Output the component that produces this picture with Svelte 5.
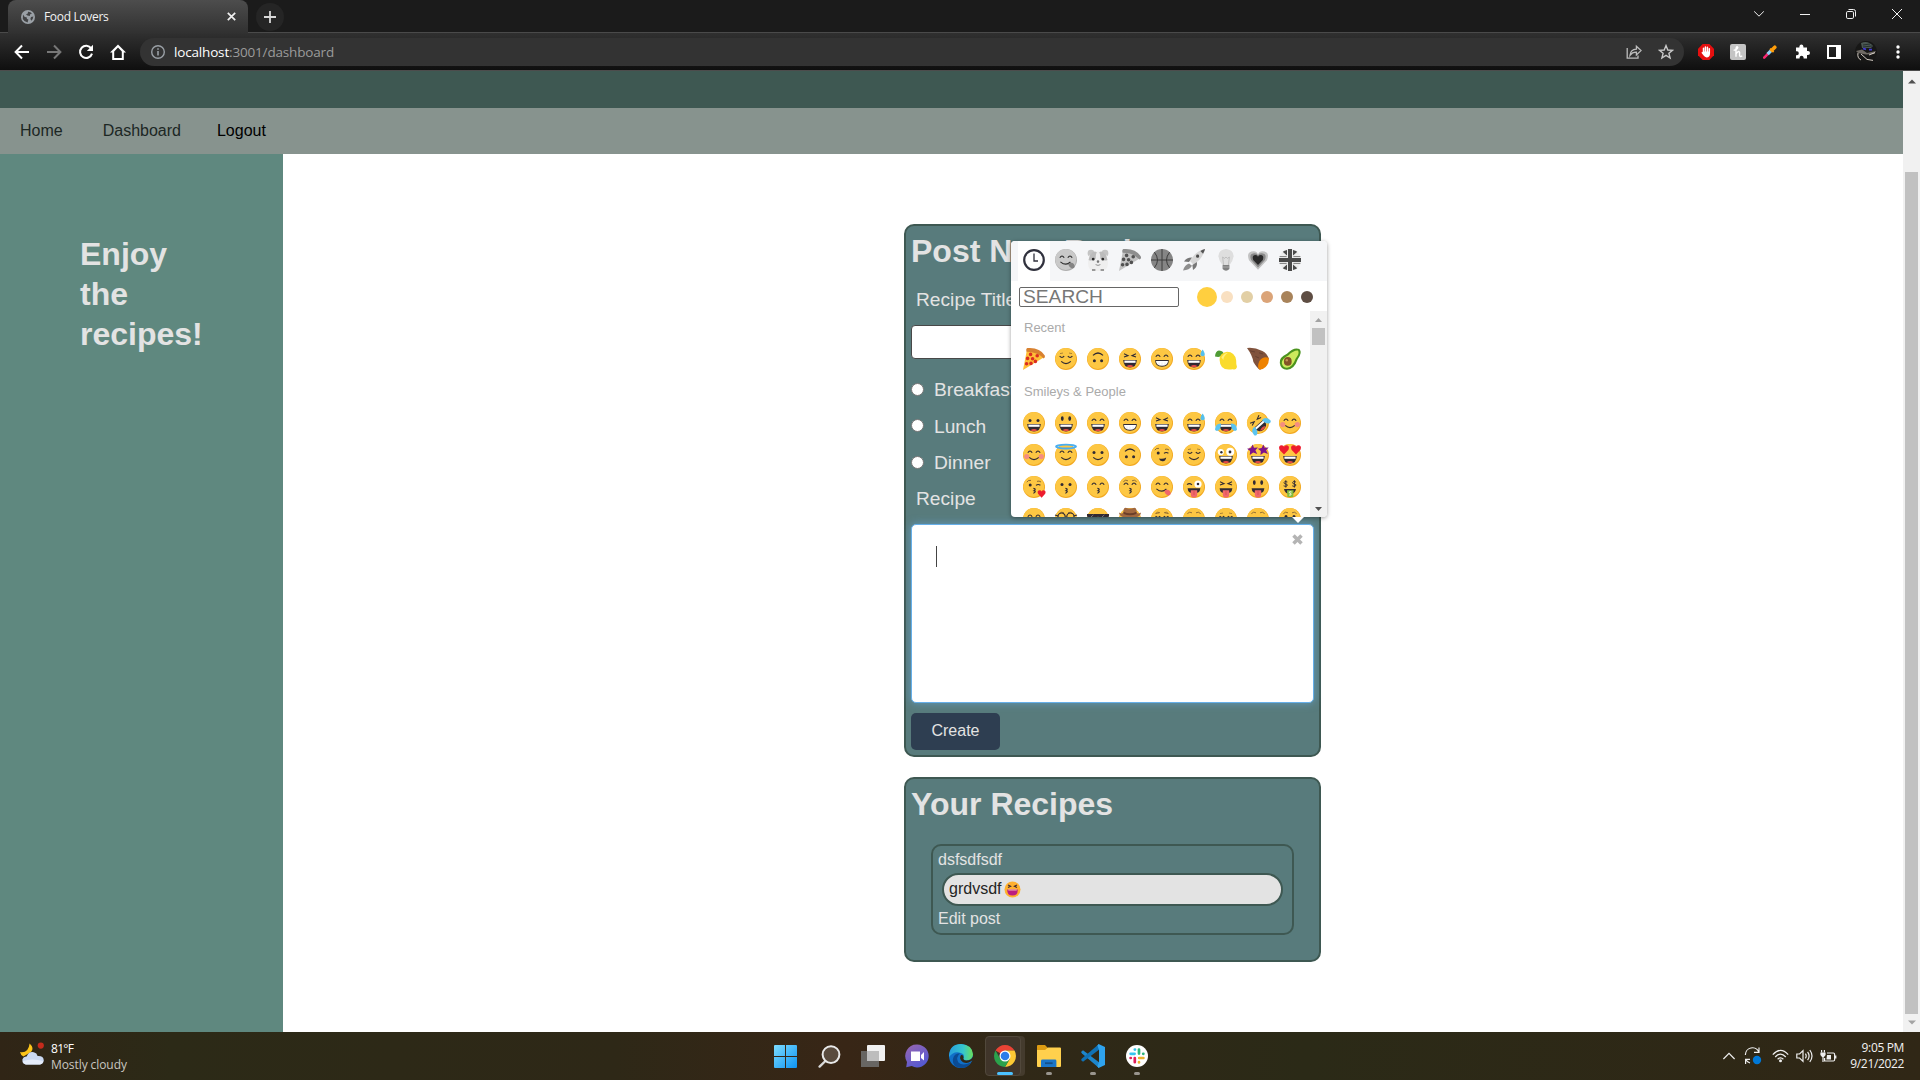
<script>
  const INK = '#302a33';
  const dot = (x, y, r, ry = r) =>
    `M${x - r} ${y}a${r} ${ry} 0 1 0 ${2 * r} 0a${r} ${ry} 0 1 0 ${-2 * r} 0Z`;
  const fill = (d, f = INK) => ({ d, f });
  const line = (d, s = INK, w = 1.1) => ({ d, s, w });

  const skin = [fill(dot(11, 11, 11), '#f2a921'), fill(dot(10.7, 10.4, 10.5), '#fdc743')];
  const heart = (x, y, k = 1) =>
    `M${x} ${y + 3.4 * k}l${-3 * k} ${-3.2 * k}q${-1.1 * k} ${-3 * k} ${1.6 * k} ${-3 * k}q${1 * k} 0 ${1.4 * k} ${1 * k}q${0.4 * k} ${-1 * k} ${1.4 * k} ${-1 * k}q${2.7 * k} 0 ${1.6 * k} ${3 * k}Z`;
  const star = (x, y) =>
    `M${x} ${y - 5}l1.3 3.2 4 -.2-2.6 2.7 1.8 3.8-4-1.6-3.4 2.6.3-4-3-2.4 3.8-.6Z`;

  const P = {
    dots: [fill(dot(7, 8.4, 1.5)), fill(dot(15, 8.4, 1.5))],
    tall: [fill(dot(7.3, 6.6, 1.4, 2.3)), fill(dot(14.7, 6.6, 1.4, 2.3))],
    happy: [line('M4.8 8.8Q7 5.2 9.2 8.8M12.8 8.8Q15 5.2 17.2 8.8')],
    squint: [line('M5 5.8L9 7.6L5 9M17 5.8L13 7.6L17 9')],
    calm: [line('M4.6 8.2Q7 10.8 9.2 8.2M12.8 8.2Q15 10.8 17.4 8.2'), line('M5 5.6L8 5M14 5L17 5.6', '#8d672e', 0.7)],
    wink: [fill(dot(7.2, 9, 1.5)), line('M13 9.4Q15 7.6 17.4 9.2'), line('M3.8 6.2Q5 3.8 8 4.4M14 5.4Q16 4.4 18 6', '#6d5230', 0.8)],
    zany: [fill(dot(5.8, 8, 3.1), '#fff'), fill(dot(15.2, 7.7, 4), '#fff'), fill(dot(6.4, 8.2, 1.2)), fill(dot(15, 8, 1.4))],
    tease: [fill(dot(15, 8, 3.6), '#fff'), fill(dot(15, 8, 1.3)), line('M4 8.6Q6.4 6.6 9 8.8')],
    stars: [fill(star(5.7, 5.6), '#7d138b'), fill(star(16.4, 5.6), '#7d138b')],
    hearts: [fill(heart(5, 5.4, 1.5), '#ed1c2e'), fill(heart(17, 5.4, 1.5), '#ed1c2e')],
    money: [line('M8.4 6Q5 4.6 5 6.7Q5 7.9 7 8Q9 8.4 8 10Q6.6 11 4.6 9.8M6.8 4.2V11.6M17 6Q13.6 4.6 13.6 6.7Q13.6 7.9 15.6 8Q17.6 8.4 16.6 10Q15.2 11 13.2 9.8M15.4 4.2V11.6', INK, 0.9)],
    open: [
      fill('M4.2 12H17.8Q17.4 19.6 11 19.6Q4.6 19.6 4.2 12Z'),
      fill('M5.4 12.6H16.6V14.8H5.4Z', '#fff'),
      fill('M7.4 18.2Q11 15.8 14.6 18.2Q11 20.4 7.4 18.2Z', '#e64a45')
    ],
    teeth: [
      fill('M4.2 12H17.8Q18 18.8 11 18.8Q4 18.8 4.2 12Z'),
      fill('M5 13H17Q16.8 17.8 11 17.8Q5.2 17.8 5 13Z', '#fff'),
      line('M8 14.6V17M11 14.6V17.6M14 14.6V17', '#c9c9c9', 0.4)
    ],
    smile: [line('M6.2 13.4Q11 17.8 15.8 13.4', INK, 1.2)],
    frown: [line('M6 7.4Q11 2.6 16 7.4', INK, 1.3), fill(dot(7.4, 12.8, 1.5)), fill(dot(14.6, 12.8, 1.5))],
    smirk: [fill('M8 14.4Q12 15.6 15.2 13.6Q14.6 17.6 11.4 17.2Q8.6 16.8 8 14.4Z')],
    kiss: [line('M10.4 12.4Q13.8 12.8 11 14.7Q13.8 15.2 10.4 17.4', INK, 1.1)],
    lick: [line('M5.4 12.8Q11 17.4 15.4 13'), fill('M13.2 15Q16.6 12.4 18.8 15Q21 19 17.6 19.4Q14.6 19.4 13.2 15Z', '#f0676b')],
    tongue: [fill('M4.6 12.2H17.4Q17 17.4 11 17.4Q5 17.4 4.6 12.2Z'), fill('M7.8 14.2H14.2V18.4Q14 21.6 11 21.6Q8 21.6 7.8 18.4Z', '#f0676b'), line('M11 15V19', '#c44', 0.6)],
    cash: [fill('M5 13H17Q16 18 11 18Q6 18 5 13Z'), fill('M8 14.2H14.6L14.2 21H8.4Z', '#84bd3a'), line('M12.6 16Q10 15 10.2 16.6Q12.8 17.4 12 19H10', '#fff', 0.8)],
    sweat: [fill('M19.6 1.4Q22.4 5.4 21.6 7.2Q19.6 9.4 17.6 7.2Q17 5.2 19.6 1.4Z', '#54c0ee')],
    tears: [fill('M0 17.6Q.4 11 6 11.4Q6 18.2 2 19Q.4 19 0 17.6Z', '#5bc4f0'), fill('M22 17.6Q21.6 11 16 11.4Q16 18.2 20 19Q21.6 19 22 17.6Z', '#5bc4f0')],
    blush: [fill(dot(3.7, 12.6, 2.6), '#f58d80'), fill(dot(18.3, 12.6, 2.6), '#f58d80')],
    halo: [line('M1 2.6a10 1.9 0 1 0 20 0a10 1.9 0 1 0 -20 0', '#4aaef0', 1.8)],
    love: [fill(heart(18.6, 17.6, 1.2), '#ed1c2e')],
    brows: [line('M4.4 5.6Q6.6 3.2 9 4.8M13 4.8Q15.4 3.2 17.6 5.6', '#7a5c33', 0.8)],
    glasses: [line(dot(6.6, 8.6, 3.6) + dot(15.4, 8.6, 3.6) + 'M0 7L3 8M19 8L22 7', INK, 1.2)],
    shades: [fill('M0 6H22V8Q20 12 15 11.6Q12.6 11 11 8.4Q9.4 11 7 11.6Q2 12 0 8Z'), line('M3.6 9.4L6.4 6.8M14.6 9.4L17.4 6.8', '#77767f', 1)],
    hat: [fill('M0 4.4Q4.4 7.6 4.6 2Q5 -1.4 8.6 .2Q11 1 13.4 .2Q17 -1.4 17.4 2Q17.6 7.6 22 4.4Q21.6 10 11 10Q.4 10 0 4.4Z', '#a1683f'), fill('M4.6 3.8Q11 6.8 17.4 3.8V6Q11 8.4 4.6 6Z', '#6b3f2a')],
    pizza: [
      fill('M0 22L3.8 2.6Q15 1.6 20.6 9.6Z', '#ffbe37'),
      fill('M4.4 0Q16.6 -1 21.8 7.4Q22.6 9.4 20.6 10.6Q14 3.6 3.6 3.8Q2.6 .6 4.4 0Z', '#d88130'),
      ...[[7.6, 6.4], [4.6, 10.4], [9.6, 10.8], [14.2, 7.8], [3.6, 15.8], [12.4, 13.4], [8, 15.4]].map(([x, y]) => fill(dot(x, y, 1.8), '#db2d22'))
    ],
    lemon: [
      fill('M4 2.6Q.4 3 0 8.6Q5.6 10.2 8.6 6.6Q9 3 4 2.6Z', '#4f9b35'),
      fill('M4.6 12Q4.2 5.2 12 3.8Q19.8 3.8 21.2 12.4Q21 16.4 22 19Q20.8 22.6 17.8 21.2Q5 23.6 4.6 12Z', '#fadb2b'),
      fill('M6.4 9.6Q8.4 5.4 13 4.8Q8.4 8 8.4 12Z', '#fff07a')
    ],
    yam: [
      fill('M0 0Q7 -1 15.4 3Q20 5.4 21.8 10.6Q20 18 13 21.8Q10 20 6.4 14Q5.4 7.4 0 0Z', '#80523c'),
      { ...fill('M21.6 9.8Q22.6 15 18.6 19Q14.4 22.6 12 21.2Q10 18.4 12.4 13Q16 8 21.6 9.8Z', '#ee8200') },
      line('M3 2.8L8 4M8.4 8.4L12 10M12 4.8L16 6', '#5b3a2e', 0.7)
    ],
    avocado: [
      fill('M.8 15Q0 9.4 8 5.8Q15 -1.4 20.4 1Q23.8 4.6 18.6 11.4Q15.4 21 8 21.8Q1.6 21.6 .8 15Z', '#4b931e'),
      fill('M2.8 15Q3 10.4 9.6 7.2Q15 2 19 2.6Q21 5.4 16.6 10.8Q13.6 19.2 8 19.8Q3.4 19.6 2.8 15Z', '#cdea5c'),
      fill(dot(8.8, 13.4, 3.9, 4.3), '#845326'),
      fill(dot(7.8, 12.2, 1.2), '#c39355')
    ],
    clock: [line(dot(11, 11, 9.8), '#30313d', 2.2), line('M11 4.6V12H15', '#30313d', 1.3)],
    hamster: [
      fill(dot(4, 4.2, 3.4), '#c4c4c4'), fill(dot(18, 4.2, 3.4), '#c4c4c4'),
      fill('M2.4 6Q11 -1.4 19.6 6Q24 22 14 22H8Q-2 22 2.4 6Z', '#efefef'),
      fill('M3 5.6Q7 1 9.8 3.2Q8.4 6 8.8 9.4Q5 12.6 1.6 11Z', '#bcbcbc'), fill('M19 5.6Q15 1 12.2 3.2Q13.6 6 13.2 9.4Q17 12.6 20.4 11Z', '#bcbcbc'),
      fill(dot(6.2, 10.2, 1.4)), fill(dot(15.8, 10.2, 1.4)), fill(dot(11, 12.6, 1.3), '#777'),
      line('M8.6 15.6Q11 17.2 13.4 15.6', '#888', 0.9), fill('M5 20h3.4v2h-3.4ZM13.6 20h3.4v2h-3.4Z', '#999')
    ],
    ball: [fill(dot(11, 11, 11), '#858585'), line('M11 0V22M0 11H22M3.4 3.2Q9.6 11 3.4 18.8M18.6 3.2Q12.4 11 18.6 18.8', '#3c3c3c', 1)],
    rocket: [
      fill('M7 12Q12 2.4 22 0Q20 9.6 10.4 15.6Z', '#d6d6d6'), fill('M1 12.6Q3.6 8.4 9 8.6L6 13Z', '#777'), fill('M10 21Q14.4 18.6 14 13L9.4 16Z', '#777'),
      fill('M0 21.6Q1.6 15.6 6 14.4L9 16.8Q6.4 21.2 0 21.6Z', '#8e8e8e'), fill('M17.4 2Q19.6 .4 22 0Q21.6 2.6 20 4.8Z', '#555'), fill(dot(14.6, 7.2, 1.6), '#4a4a4a')
    ],
    bulb: [
      fill('M11 0Q18.6 .6 18.6 7.6Q18 12 14.6 16H7.4Q4 12 3.4 7.6Q3.4 .6 11 0Z', '#dedede'),
      line('M8.6 16L7.6 8L9.6 9.4L11 8L12.4 9.4L14.4 8L13.4 16', '#aaa', 0.6), fill('M7.6 16H14.4V20Q11 23.6 7.6 20Z', '#808080'), line('M7.4 18H14.6', '#bbb', 0.7)
    ],
    beat: [fill(heart(11, 10.6, 3), '#c2c2c2'), fill(heart(11, 10.6, 2.3), '#888'), fill(heart(11, 10.6, 1.6), '#292929')],
    flag: [
      fill(dot(11, 11, 11), '#eee'),
      fill('M3 3.4L8 7.4V1L5 2ZM19 3.4L14 7.4V1L17 2ZM3 18.6L8 14.6V21L5 20ZM19 18.6L14 14.6V21L17 20Z', '#4a4a4a'),
      fill('M9 0H13V9H22V13H13V22H9V13H0V9H9Z', '#494949'), line('M3 3L8.4 7.8M19 3L13.6 7.8M3 19L8.4 14.2M19 19L13.6 14.2', '#eee', 1.3),
      line('M.6 7.6H7.6M14.4 7.6H21.4M.6 14.4H7.6M14.4 14.4H21.4', '#4a4a4a', 0.7)
    ]
  };

  const face = (...parts) => [...skin, ...parts.flatMap((p) => P[p])];
  const rolling = face('squint', 'open', 'tears');

  const tabs = [P.clock, face('happy', 'lick'), P.hamster, P.pizza, P.ball, P.rocket, P.bulb, P.beat, P.flag];
  const recent = [
    P.pizza, face('calm', 'smile'), face('frown'), face('squint', 'open'), face('happy', 'teeth'),
    face('happy', 'open', 'sweat'), P.lemon, P.yam, P.avocado
  ];
  const people = [
    face('dots', 'open'), face('tall', 'open'), face('happy', 'open'), face('happy', 'teeth'), face('squint', 'open'),
    face('happy', 'open', 'sweat'), face('happy', 'open', 'tears'), rolling, face('happy', 'smile', 'blush'),
    face('happy', 'smile', 'blush'), face('happy', 'smile', 'halo'), face('dots', 'smile'), face('frown'),
    face('wink', 'smirk'), face('calm', 'smile'), face('zany', 'open'), face('stars', 'open'), face('hearts', 'open'),
    face('wink', 'kiss', 'love'), face('dots', 'kiss'), face('happy', 'kiss'), face('happy', 'brows', 'kiss'),
    face('happy', 'lick'), face('tease', 'tongue'), face('squint', 'tongue'), face('tall', 'tongue'), face('money', 'cash'),
    face('happy', 'blush'), face('brows', 'glasses'), face('shades'), face('hat'), face('brows', 'calm'),
    face('brows'), face('calm'), face('brows'), face('brows', 'dots')
  ];
  const tilted = people.indexOf(rolling);
  const tones = ['#f9e0c1', '#e2cfa5', '#dba478', '#a8835a', '#5e4d43'];
  const meals = ['Breakfast', 'Lunch', 'Dinner'];
</script>

{#snippet emoji(shapes, tilt)}
  <svg class="emoji" class:tilt viewBox="0 0 22 22">
    {#each shapes as p}
      <path d={p.d} fill={p.f ?? 'none'} stroke={p.s ?? 'none'} stroke-width={p.w ?? 0} />
    {/each}
  </svg>
{/snippet}

<div class="screen">
  <header class="browser">
    <div class="strip">
      <div class="tab">
        <svg class="globe" width="14" height="14" viewBox="0 0 14 14"><circle cx="7" cy="7" r="7" fill="#9aa0a6" /><path d="M2 4.4Q3 7 5.6 7.2L6 9L7.4 9.6L6.6 12.4Q3.2 12 1.8 9ZM7 1.8Q9.4 1.6 11 3.6L9.2 4.2L8.8 6L6.4 5.4L5 4.2L6.8 3.4ZM10 7L12.4 6.6Q12 9.6 10.4 10.8L9.4 9Z" fill="#424345" /></svg>
        <span class="tab-title">Food Lovers</span>
        <svg width="9" height="9" viewBox="0 0 9 9"><path d="M.8 .8L8.2 8.2M8.2 .8L.8 8.2" stroke="#f0f0f0" stroke-width="1.7" /></svg>
      </div>
      <div class="new-tab"><svg width="12" height="12" viewBox="0 0 12 12"><path d="M6 0V12M0 6H12" stroke="#d8d8d8" stroke-width="1.8" /></svg></div>
      <div class="controls">
        <svg viewBox="0 0 10 10"><path d="M0 2.2L5 7.2L10 2.2" /></svg>
        <svg viewBox="0 0 10 10"><path d="M0 5.5H10" /></svg>
        <svg viewBox="0 0 10 10"><rect x=".5" y="2.5" width="7" height="7" rx="1.3" /><path d="M2.5 .5H7.5Q9.5 .5 9.5 2.5V7.5" /></svg>
        <svg viewBox="0 0 10 10"><path d="M0 0L10 10M10 0L0 10" /></svg>
      </div>
    </div>
    <div class="toolbar">
      <div class="nav-icons">
        <svg viewBox="0 0 16 16"><path d="M15 8H2M8 1.5L1.6 8L8 14.5" stroke="#fff" stroke-width="2" fill="none" /></svg>
        <svg viewBox="0 0 16 16"><path d="M1 8H14M8 1.5L14.4 8L8 14.5" stroke="#777" stroke-width="2" fill="none" /></svg>
        <svg viewBox="0 0 16 16"><path d="M13.2 4.4A6.1 6.1 0 1 0 14 9.6" stroke="#fff" stroke-width="2" fill="none" /><path d="M15 .8V7H8.8Z" fill="#fff" /></svg>
        <svg viewBox="0 0 16 16"><path d="M0 8.6L8 .6L16 8.6H13.8V16H2.2V8.6ZM4.2 7.4V14H11.8V7.4L8 3.4Z" fill="#fff" fill-rule="evenodd" /></svg>
      </div>
      <div class="omnibox">
        <svg width="14" height="14" viewBox="0 0 14 14"><circle cx="7" cy="7" r="6.3" fill="none" stroke="#9aa0a6" stroke-width="1.4" /><path d="M7 6V10.6M7 3.2V4.8" stroke="#9aa0a6" stroke-width="1.6" /></svg>
        <span class="url"><b>localhost</b>:3001/dashboard</span>
        <svg width="16" height="16" viewBox="0 0 16 16"><path d="M1.2 4V14.2H12V11.4M4 11.4Q4.4 5.6 10.4 5.2V2.2L15 6.6L10.4 11V8.2Q6.4 8 4 11.4Z" fill="none" stroke="#bdbdbd" stroke-width="1.3" /></svg>
        <svg width="16" height="16" viewBox="0 0 16 16"><path d="M8 1.6L9.8 6L14.6 6.3L10.9 9.3L12.1 14L8 11.4L3.9 14L5.1 9.3L1.4 6.3L6.2 6Z" fill="none" stroke="#c9c9c9" stroke-width="1.4" /></svg>
      </div>
      <div class="extensions">
        <svg width="16" height="16" viewBox="0 0 16 16"><path d="M4.7 0H11.3L16 4.7V11.3L11.3 16H4.7L0 11.3V4.7Z" fill="#e60f0f" /><path d="M5.5 9V4.2M7.4 8V2.9M9.4 8V3.2M11.3 9V4.8" stroke="#fff" stroke-width="1.5" stroke-linecap="round" /><path d="M4.8 7.6H12V10Q11.8 13.4 8.6 13.4Q6.8 13.4 5.6 11.6L3.4 8.8Q4 7.8 4.8 8.2Z" fill="#fff" /></svg>
        <svg width="16" height="16" viewBox="0 0 16 16"><rect width="16" height="16" rx="2" fill="#c4c4c4" /><path d="M3.6 6.4Q7.4 5.8 7.8 3.4Q6.6 1.6 6 4.6V12.8M6 10Q8.4 6.2 9.6 8.4V11.4Q10 13.4 12.2 11.8" fill="none" stroke="#fff" stroke-width="1.4" /></svg>
        <svg width="14" height="14" viewBox="0 0 14 14"><path d="M1.2 12.6L5.4 8.4" stroke="#f92872" stroke-width="2.6" stroke-linecap="round" /><path d="M4.6 9.2L8.6 5.2" stroke="#8fd0f5" stroke-width="3.2" /><path d="M7 3.6L10.6 7.2" stroke="#ff9d0a" stroke-width="1.8" /><path d="M9 5L11.8 2.2" stroke="#ff9d0a" stroke-width="3.6" stroke-linecap="round" /></svg>
        <svg width="15" height="15" viewBox="0 0 15 15"><path d="M1 3.6H4.4V2.6Q4.6 .4 6.4 .4Q8.2 .4 8.4 2.6V3.6H12V7H13Q15 7.2 15 8.9Q15 10.8 13 11H12V14.6H8.6V13.6Q8.4 11.8 6.6 11.8Q4.8 11.8 4.6 13.6V14.6H1V11.2H2Q3.8 11 3.8 9.2Q3.8 7.4 2 7.2H1Z" fill="#fff" /></svg>
        <svg width="14" height="14" viewBox="0 0 14 14"><path d="M0 0H14V14H0ZM2 2V12H9V2Z" fill="#fff" fill-rule="evenodd" /></svg>
        <svg width="22" height="22" viewBox="0 0 22 22"><circle cx="11" cy="11" r="11" fill="#171716" /><path d="M6 2Q13 -1 18 5L16 7H7Z" fill="#4b5853" /><path d="M1 10L7 8.4L12 12L21 10L19 13L11 13.6L3 12Z" fill="#6f6a64" /><path d="M8 7.4L11 8.4M14 8.6L17 8.6" stroke="#3f38d0" stroke-width="1.8" /><path d="M3 12Q2 17 6 19M6 13L12 18.4L18 19.4M14 14L20 11.6" stroke="#d4ccc4" stroke-width="1" fill="none" /><path d="M8 4L15 3M8 6L17 5" stroke="#222b2b" stroke-width=".9" /></svg>
        <svg width="4" height="14" viewBox="0 0 4 14"><circle cx="2" cy="2" r="1.7" fill="#fff" /><circle cx="2" cy="7" r="1.7" fill="#fff" /><circle cx="2" cy="12" r="1.7" fill="#fff" /></svg>
      </div>
    </div>
  </header>

  <div class="viewport">
    <div class="page">
      <div class="banner"></div>
      <nav><span>Home</span><span>Dashboard</span><span class="logout">Logout</span></nav>
      <div class="body">
        <aside><h1>Enjoy<br />the<br />recipes!</h1></aside>
        <main>
          <section class="card post">
            <h1>Post New Recipe</h1>
            <div class="label">Recipe Title</div>
            <div class="field"></div>
            <div class="meals">
              {#each meals as meal}
                <div class="meal"><i></i><span>{meal}</span></div>
              {/each}
            </div>
            <div class="label recipe">Recipe</div>
            <div class="editor">
              <span class="caret"></span>
              <svg width="11" height="11" viewBox="0 0 11 11"><path d="M1.5 1.5L9.5 9.5M9.5 1.5L1.5 9.5" stroke="#b4b4b4" stroke-width="3.5" /></svg>
            </div>
            <div class="create">Create</div>

            <div class="picker">
              <div class="panel">
                <div class="tabs">
                  {#each tabs as t, i}
                    <div class="cell" class:active={i === 0} class:gray={i > 0}>{@render emoji(t, false)}</div>
                  {/each}
                </div>
                <div class="search">
                  <div class="box">SEARCH</div>
                  <div class="tones">
                    <i class="selected"></i>
                    {#each tones as tone}<i style:background={tone}></i>{/each}
                  </div>
                </div>
                <div class="list">
                  <div class="groups">
                    <h4>Recent</h4>
                    <div class="grid">{#each recent as e}<div class="cell">{@render emoji(e, false)}</div>{/each}</div>
                    <h4>Smileys &amp; People</h4>
                    <div class="grid">{#each people as e, i}<div class="cell">{@render emoji(e, i === tilted)}</div>{/each}</div>
                  </div>
                  <div class="bar small">
                    <svg width="7" height="4" viewBox="0 0 7 4"><path d="M0 4L3.5 0L7 4Z" fill="#a3a3a3" /></svg>
                    <div class="thumb"></div>
                    <svg width="7" height="4" viewBox="0 0 7 4"><path d="M0 0L3.5 4L7 0Z" fill="#505050" /></svg>
                  </div>
                </div>
              </div>
              <svg class="pointer" width="12" height="6" viewBox="0 0 12 6"><path d="M0 0H12L6 6Z" fill="#fff" /></svg>
            </div>
          </section>

          <section class="card yours">
            <h1>Your Recipes</h1>
            <div class="recipe-item">
              <div>dsfsdfsdf</div>
              <div class="pill"><span>grdvsdf</span><svg width="17" height="17" viewBox="0 0 17 17"><circle cx="8.5" cy="8.5" r="8" fill="#ffb02e" /><path d="M3.2 8.4H13.8Q14 14.6 8.5 14.6Q3 14.6 3.2 8.4Z" fill="#bb1d80" /><path d="M4 8.4H13L12.6 9.6H4.4Z" fill="#f3b9b5" /><path d="M4 4L6.6 5.2L4 6.4M13 4L10.4 5.2L13 6.4" fill="none" stroke="#402a32" stroke-width="1.1" /></svg></div>
              <div>Edit post</div>
            </div>
          </section>
        </main>
      </div>
    </div>
    <div class="bar">
      <svg width="8" height="5" viewBox="0 0 8 5"><path d="M0 4.5L4 .5L8 4.5Z" fill="#505050" /></svg>
      <div class="thumb"></div>
      <svg width="8" height="5" viewBox="0 0 8 5"><path d="M0 .5L4 4.5L8 .5Z" fill="#a3a3a3" /></svg>
    </div>
  </div>

  <footer>
    <div class="weather">
      <svg width="24" height="24" viewBox="0 0 24 24"><path d="M9.6 1.4Q14.6 6 11 10L3.4 14.6Q.6 13 0 10Q8.4 11.4 9.6 1.4Z" fill="#fcc419" /><path d="M5.6 22.4Q2 22 2.4 17.6Q3.4 14.4 6.6 14.4Q9 9 13.8 10.2Q17 11 17.6 14Q23.6 13.6 23.8 18.4Q23.4 22 20 22.4Z" fill="#cbd9f2" /><path d="M6 22.4Q3 22 3 19Q12 16 23 19Q23 22 20 22.4Z" fill="#e6edfa" /><circle cx="20.8" cy="3.6" r="3.1" fill="#c42b1c" /></svg>
      <div class="forecast"><b>81°F</b><span>Mostly cloudy</span></div>
    </div>
    <div class="apps">
      <div class="app">
        <svg width="23" height="23" viewBox="0 0 23 23"><defs><linearGradient id="win" x2="1" y2="1"><stop stop-color="#7ddcff" /><stop offset="1" stop-color="#0d93f2" /></linearGradient></defs><path d="M1 0H11V11H0V1Q0 0 1 0ZM12 0H22Q23 0 23 1V11H12ZM0 12H11V23H1Q0 23 0 22ZM12 12H23V22Q23 23 22 23H12Z" fill="url(#win)" /></svg>
      </div>
      <div class="app"><svg width="23" height="23" viewBox="0 0 23 23"><path d="M7.4 16L1.6 21.6" stroke="#d8d8d8" stroke-width="2.4" stroke-linecap="round" /><circle cx="13" cy="9.6" r="8.4" fill="#594b3e" stroke="#e9e9e9" stroke-width="2" /></svg></div>
      <div class="app"><svg width="24" height="22" viewBox="0 0 24 22"><rect x="6" width="18" height="16" rx="1" fill="#f1f1f1" /><path d="M0 6H18V22H0Z" fill="#686663" /><path d="M6 6H18V16H6Z" fill="#bdbdbd" /></svg></div>
      <div class="app"><svg width="24" height="24" viewBox="0 0 24 24"><defs><linearGradient id="chat" x2=".6" y2="1"><stop stop-color="#9a66b0" /><stop offset="1" stop-color="#5459d2" /></linearGradient></defs><path d="M12 0.6A11.4 11.4 0 1 1 6.8 22L1.2 23.2L2 18A11.4 11.4 0 0 1 12 .6Z" fill="url(#chat)" /><path d="M6 7.6H15V17H6ZM16 11L19 8V16.6L16 14Z" fill="#fff" /></svg></div>
      <div class="app"><svg width="24" height="24" viewBox="0 0 24 24"><defs><linearGradient id="edge"><stop stop-color="#279ddd" /><stop offset=".6" stop-color="#36c6cc" /><stop offset="1" stop-color="#6bdf57" /></linearGradient></defs><circle cx="12" cy="12" r="12" fill="#1170c8" /><path d="M0 11Q1.2 0 12 0Q23.4 .6 24 10.6Q23.4 16.4 17.4 16.4Q13.4 16 14.6 13.4Q15.6 10 11.8 9Q5 6.4 0 13Z" fill="url(#edge)" /><path d="M11 9.2Q6.4 13.4 9.4 18.4Q13.4 22.4 22 18.4Q18.6 24 12 24Q3.4 23.4 3.8 15.4Q5 9 11 9.2Z" fill="#0b4b94" /><path d="M12 11Q9.4 15 14 18.2Q18.4 20 21.6 17.6L24 16V12.4Q22.4 16.4 17.4 16.4Q13.4 16 14.6 13.4Q14.6 10.6 12 11Z" fill="#302716" /></svg></div>
      <div class="app open current"><svg width="22" height="22" viewBox="0 0 22 22"><path d="M11 11L1.5 5.5A11 11 0 0 1 20.5 5.5H11Z" fill="#ea4335" /><path d="M11 11V5.5H20.5A11 11 0 0 1 11 22L15.8 13.7Z" fill="#fcc934" /><path d="M11 11L15.8 13.7L11 22A11 11 0 0 1 1.5 5.5L6.2 13.7Z" fill="#2ba24c" /><circle cx="11" cy="11" r="5.5" fill="#fff" /><circle cx="11" cy="11" r="4.3" fill="#2b7de9" /></svg></div>
      <div class="app open"><svg width="24" height="22" viewBox="0 0 24 22"><path d="M0 1Q0 0 1 0H8L11 3H23Q24 3 24 4V10H0Z" fill="#dc9b12" /><path d="M0 5H8L11 2.6H23Q24 2.6 24 4V21Q24 22 23 22H1Q0 22 0 21Z" fill="#ffd04d" /><path d="M4 22V16Q4 14.6 5.6 14.6H18Q19.4 14.6 19.4 16V22Z" fill="#1a76c9" /><path d="M8 18.2H15.6" stroke="#155088" stroke-width="1.8" /></svg></div>
      <div class="app open"><svg width="24" height="24" viewBox="0 0 24 24"><path d="M0 8L2 6.2L18 18.2V24L1 9.4Z" fill="#1d86cc" /><path d="M0 16L2 17.8L18 5.8V0L1 14.6Z" fill="#1072b6" /><path d="M17.6 0L24 3V21L17.6 24L16.4 22.6L18 18V6L16.4 1.4Z" fill="#2fa3ee" /></svg></div>
      <div class="app open"><svg width="22" height="22" viewBox="0 0 22 22"><circle cx="11" cy="11" r="11" fill="#fff" /><g fill="none" stroke-width="2.7" stroke-linecap="round"><path d="M4.6 8.8H8.6M8.8 4.6H9" stroke="#36c5f0" /><path d="M13 4.6V8.6M17.2 8.8H17.4" stroke="#2eb67d" /><path d="M13.2 13H17.4M13 17.2V17.4" stroke="#ecb22e" /><path d="M8.8 13V17.2M4.6 13H4.8" stroke="#e01e5a" /></g></svg></div>
    </div>
    <div class="tray">
      <svg width="14" height="8" viewBox="0 0 14 8"><path d="M1.4 7L7 1.4L12.6 7" /></svg>
      <svg class="sync" width="18" height="18" viewBox="0 0 18 18"><path d="M1.4 8A7 7 0 0 1 14.8 5M15 .6V5.4H10M6 16Q2.6 14.6 2 12.6M1.6 17V12.4H6" /><circle cx="13" cy="13" r="4.2" fill="#0078d7" stroke="none" /></svg>
      <svg width="17" height="14" viewBox="0 0 17 14"><path d="M.8 5.6Q8.5 -2.8 16.2 5.6M3.2 8Q8.5 2.4 13.8 8M5.6 10.2Q8.5 7.4 11.4 10.2" /><circle cx="8.5" cy="11.8" r="1.5" fill="#eee" stroke="none" /></svg>
      <svg width="17" height="14" viewBox="0 0 17 14"><path d="M.8 5H3.6L7 1.6V12.4L3.6 9H.8ZM9.4 4.6Q11 7 9.4 9.4M11.6 2.8Q14.6 7 11.6 11.2M13.8 1Q18.2 7 13.8 13" /></svg>
      <svg width="17" height="13" viewBox="0 0 17 13"><path d="M7 3H13.4Q14.6 3 14.6 4.2V9.8Q14.6 11 13.4 11H4.6V8M15.8 5.4V8.6M1.6 0V2.6M4.4 0V2.6M3 6V12" /><path d="M.4 2.6H5.6V5L4 7H2L.4 5ZM7 5H11V9.4H6.4Z" fill="#eee" stroke="none" /></svg>
      <div class="clock"><span>9:05 PM</span><span>9/21/2022</span></div>
    </div>
  </footer>
</div>

<style>
  :global(body) { margin: 0; overflow: hidden; }
  .screen { width: 1920px; height: 1080px; display: flex; flex-direction: column; background: #fff; color: #e3e3e3; font: 16px/20px Arial, 'Liberation Sans', sans-serif; }
  .screen :global(svg) { display: block; flex: none; }
  h1, h4 { margin: 0; }

  .browser { height: 70px; border-bottom: 1px solid #4c4c4c; background: #1b1b1b; font-family: 'Open Sans', 'Noto Sans', sans-serif; }
  .strip { height: 33px; display: flex; border-bottom: 1px solid #4a4a4a; box-sizing: border-box; }
  .tab { width: 240px; height: 34px; margin-left: 8px; padding: 0 12px 0 13px; box-sizing: border-box; display: flex; align-items: center; border-radius: 8px 8px 0 0; background: linear-gradient(#4d4d4d, #303030); }
  .tab > :global(svg) { margin-top: -1px; }
  .tab-title { flex: 1; margin: 0 0 0 9px; font-size: 12px; letter-spacing: -.32px; color: #f2f2f2; }
  .new-tab { width: 28px; height: 28px; margin: 3px 0 0 8px; border-radius: 50%; background: #252525; display: grid; place-items: center; }
  .controls { display: flex; gap: 36px; margin: 9px 18px 0 auto; }
  .controls svg { width: 10px; height: 10px; fill: none; stroke: #f0f0f0; stroke-width: 1; }
  .toolbar { height: 37px; display: flex; align-items: center; background: linear-gradient(#303030, #0f0f0f); }
  .nav-icons { display: flex; gap: 16px; padding: 1px 14px 0; }
  .nav-icons svg { width: 16px; height: 16px; }
  .omnibox { width: 1544px; height: 28px; padding: 0 10px 0 11px; box-sizing: border-box; border-radius: 14px; background: #333; display: flex; align-items: center; gap: 16px; }
  .url { flex: 1; margin-left: -7px; font-size: 13.5px; letter-spacing: -.17px; color: #9b9b9b; }
  .url b { font-weight: 400; color: #fff; }
  .extensions { display: grid; grid-template-columns: repeat(7, 32px); place-items: center; margin-left: 6px; }

  .viewport { height: 961px; display: flex; }
  .page { width: 1903px; display: flex; flex-direction: column; }
  .banner { height: 37px; background: #3e5852; }
  nav { height: 46px; box-sizing: border-box; padding: 13px 20px 0; display: flex; gap: 40px; background: #87938e; color: #1c2724; }
  .logout { margin-left: -4px; color: #000; }
  .body { flex: 1; display: flex; }
  aside { width: 283px; box-sizing: border-box; padding: 80px 0 0 80px; background: #5f887f; }
  h1 { font-size: 32px; line-height: 40px; }
  main { flex: 1; padding: 70px 0 0 621px; display: flex; flex-direction: column; gap: 20px; }
  .card { position: relative; width: 417px; box-sizing: border-box; padding: 5px; border: 2px solid #3e5852; border-radius: 10px; background: #587b7c; }
  .post { height: 533px; }
  .yours { height: 185px; }
  .label { margin: 17px 0 0 5px; font-size: 19.2px; line-height: 24px; }
  .field { height: 34px; margin-top: 13px; box-sizing: border-box; border: 1px solid #484848; border-radius: 4px; background: #fff; }
  .meals { margin-top: 18px; display: flex; flex-direction: column; gap: 12.5px; }
  .meal { display: flex; align-items: center; gap: 10px; font-size: 19.2px; line-height: 24px; }
  .meal span { margin: 1px 0 -1px; }
  .meal i { width: 13px; height: 13px; box-sizing: border-box; border: 1px solid #767676; border-radius: 50%; background: #fff; }
  .label.recipe { margin-top: 13px; }
  .editor { height: 179px; margin-top: 13px; box-sizing: border-box; padding: 21px 10px 0 24px; display: flex; justify-content: space-between; border: 1px solid #66afe9; border-radius: 5px; background: #fff; box-shadow: 0 0 8px rgba(102, 175, 233, .6); width: 403px; }
  .caret { width: 1px; height: 21px; background: #444; }
  .editor svg { margin-top: -12px; }
  .create { width: 89px; height: 37px; margin-top: 10px; border-radius: 5px; background: #2e3e51; text-align: center; line-height: 35px; }

  .picker { position: absolute; left: 105px; top: 15px; width: 316px; }
  .panel { height: 276px; overflow: hidden; border-radius: 4px; background: #fff; box-shadow: 0 1px 4px rgba(0, 0, 0, .38); }
  .tabs { height: 40px; padding-left: 7px; display: flex; background: #f5f6f8; }
  .tabs .cell { height: 38px; padding-bottom: 2px; }
  .cell { width: 32px; height: 32px; display: grid; place-items: center; }
  .active { background: #fff; }
  .gray { filter: grayscale(1); }
  .emoji { width: 22px; height: 22px; overflow: visible; }
  .tilt { transform: rotate(-42deg); }
  .search { height: 30px; padding: 6px 0 0 8px; box-sizing: border-box; display: flex; }
  .box { width: 160px; height: 20px; box-sizing: border-box; padding-left: 3px; border: 1px solid #666; border-radius: 2px; color: #777; font-size: 19.2px; line-height: 17px; }
  .tones { height: 20px; margin-left: 18px; display: flex; align-items: center; gap: 8px; }
  .tones i { width: 12px; height: 12px; border-radius: 50%; }
  .tones .selected { width: 20px; height: 20px; margin-right: -4px; background: #ffcf3f; }
  .list { height: 206px; display: flex; }
  .groups { width: 299px; padding-left: 7px; box-sizing: border-box; }
  .groups h4 { height: 32px; padding-left: 6px; color: #aaa; font-size: 13px; font-weight: 400; line-height: 33px; }
  .grid { display: grid; grid-template-columns: repeat(9, 32px); }
  .bar { width: 17px; box-sizing: border-box; padding: 8px 2px 7px; background: #f1f1f1; display: flex; flex-direction: column; align-items: center; }
  .bar .thumb { width: 13px; height: 843px; margin: 88px 0 6px; background: #c1c1c1; }
  .bar.small { padding: 7px 2px 6px; }
  .bar.small .thumb { height: 17px; margin: 6px 0 auto; }
  .pointer { margin-left: 281px; position: relative; }

  .recipe-item { width: 363px; height: 91px; box-sizing: border-box; margin: 20px 0 0 20px; padding: 4px 5px; border: 2px solid #3e5852; border-radius: 10px; }
  .pill { width: 341px; height: 33px; margin: 3px 0 0 4px; padding-left: 5px; box-sizing: border-box; display: flex; align-items: center; gap: 3px; border: 2px solid #3e5852; border-radius: 17px; background: #e3e3e3; color: #252525; line-height: 26px; }
  .pill span { margin-top: -2px; }
  .pill + div { margin-top: 3px; }

  footer { height: 48px; display: grid; grid-template-columns: 763px 1fr auto; background: linear-gradient(90deg, #302516, #2c2a17 9%, #2e2817 32%, #382616 44%, #302817 53%, #2b2a17 68%, #302716); font: 12px/16px 'Open Sans', 'Noto Sans', sans-serif; color: #f2f2f2; }
  .weather { display: flex; gap: 7px; padding: 10px 0 0 20px; }
  .forecast { display: flex; flex-direction: column; margin-top: -1px; }
  .forecast b { font-weight: 400; letter-spacing: -.7px; color: #fff; }
  .forecast span { color: #c9c6c0; letter-spacing: -.08px; }
  .apps { display: flex; }
  .app { width: 44px; height: 48px; position: relative; display: grid; place-items: center; }
  .app:first-child { padding-right: 1px; margin-right: -1px; }
  .open::after { content: ''; position: absolute; left: 19px; top: 40px; width: 6px; height: 3px; border-radius: 2px; background: #99958e; }
  .current::before { content: ''; position: absolute; left: 2px; top: 4px; width: 34px; height: 38px; border: 1px solid #51483b; border-radius: 4px; box-shadow: 4px 0 0 #443b2d; background: #40352a; }
  .current::after { left: 14px; width: 16px; background: #4cc2ff; }
  .current svg { position: relative; }
  .tray { display: flex; align-items: center; padding-right: 16px; }
  .tray svg { fill: none; stroke: #eee; stroke-width: 1.2; margin-right: 7px; }
  .tray .sync { margin: 0 10px 0 1px; }
  .clock { width: 60px; display: flex; flex-direction: column; align-items: flex-end; letter-spacing: -.35px; }
</style>
